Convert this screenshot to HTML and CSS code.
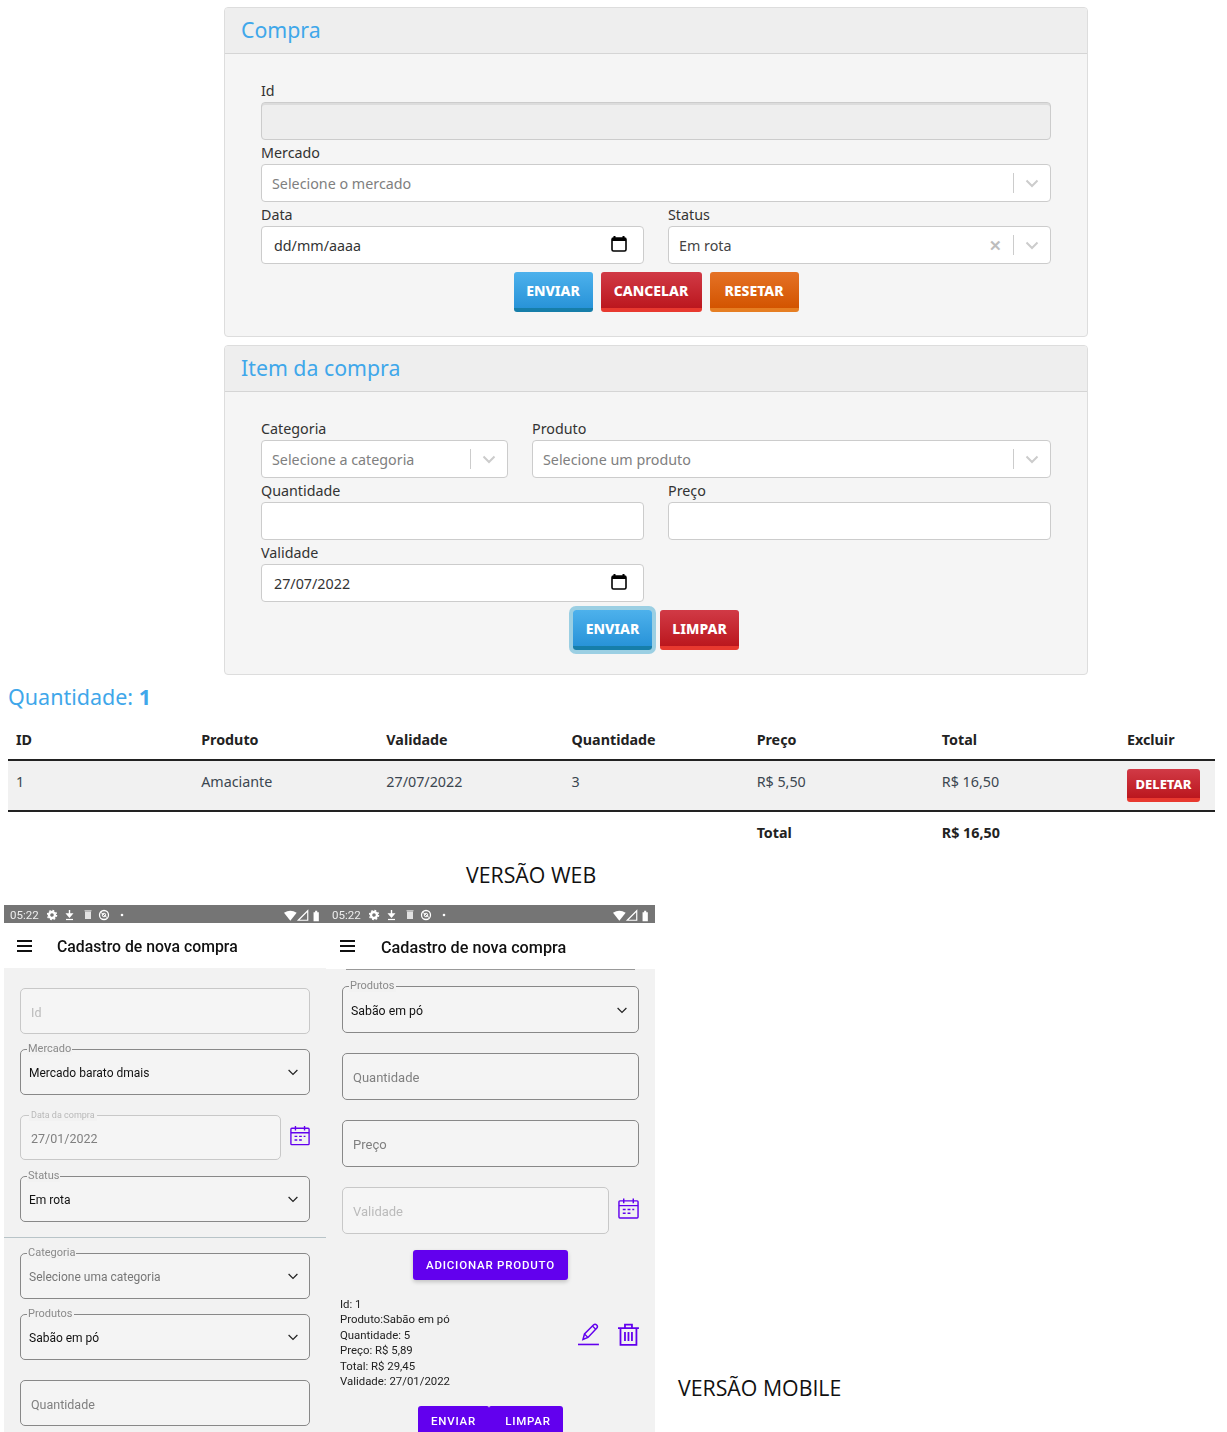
FILE: index.html

```html
<!DOCTYPE html>
<html lang="pt-BR">
<head>
  <meta charset="UTF-8" />
  <meta name="viewport" content="width=device-width, initial-scale=1.0" />
  <title>Cadastro de nova compra</title>
  <link rel="stylesheet" href="styles.css">
</head>
<body>
  <svg class="defs" width="0" height="0">
    <symbol id="chev" viewBox="0 0 20 20"><path d="M4.5 7.5 10 13l5.500-5.500" fill="none" stroke="currentColor"/></symbol>
    <symbol id="cal-black" viewBox="0 0 16 16"><path d="M3.500 0v2M12.500 0v2" stroke="#000" stroke-width="2"/><rect x="1" y="2" width="14" height="13" rx="1.500" fill="none" stroke="#000" stroke-width="1.600"/><rect x="1" y="2" width="14" height="3" fill="#000"/></symbol>
    <symbol id="cal-purple" viewBox="0 0 22 22"><rect x="1" y="3" width="20" height="18" rx="1" fill="none" stroke="#6200ee" stroke-width="1.500"/><path d="M1 8h20M6 0.500v5M16 0.500v5" stroke="#6200ee" stroke-width="1.500"/><path d="M5 12h3M10 12h3M15 12h2M5 16h3M10 16h3" stroke="#6200ee" stroke-width="1.500"/></symbol>
    <symbol id="status-left" viewBox="0 0 82 12">
      <circle cx="5" cy="6" r="3" fill="none" stroke="#fff" stroke-width="2.400"/>
      <circle cx="5" cy="6" r="4.600" fill="none" stroke="#fff" stroke-width="1.300" stroke-dasharray="1.800 1.800"/>
      <path d="M22.500 1v5.500M20 5l2.500 3L25 5z" stroke="#fff" stroke-width="1.400" fill="#fff"/>
      <path d="M19 10.500h7" stroke="#fff" stroke-width="1.200"/>
      <path d="M38 2.500h6V10h-6z" fill="#e2e2e2"/><path d="M37.500 1.800h7" stroke="#e2e2e2"/>
      <circle cx="57" cy="6" r="4.500" fill="none" stroke="#fff" stroke-width="1.300"/>
      <path d="M54 3.500 60 8.500" stroke="#fff"/><circle cx="57" cy="6" r="1.800" fill="none" stroke="#fff"/>
      <circle cx="75" cy="6" r="1.300" fill="#fff"/>
    </symbol>
    <symbol id="status-right" viewBox="0 0 36 12">
      <path d="M0 3.500Q6-0.500 12 3.500L6 11z" fill="#fff"/>
      <path d="M22.500 1.500v9h-9z" fill="none" stroke="#fff" stroke-width="1.100"/>
      <path d="M28 3h1.500V1.500h2V3H33v8.500h-5z" fill="#fff"/>
    </symbol>
  </svg>

  <div class="page">
    <section class="panel">
      <div class="panel-head"><h2>Compra</h2></div>
      <div class="panel-body">
        <label class="lbl">Id</label>
        <div class="input disabled"></div>
        <label class="lbl">Mercado</label>
        <div class="input">
          <span class="placeholder">Selecione o mercado</span>
          <span class="sep"></span>
          <svg class="chev"><use href="#chev"/></svg>
        </div>
        <div class="row">
          <div class="col">
            <label class="lbl">Data</label>
            <div class="input date">
              <span>dd/mm/aaaa</span>
              <svg class="cal"><use href="#cal-black"/></svg>
            </div>
          </div>
          <div class="col">
            <label class="lbl">Status</label>
            <div class="input">
              <span class="value">Em rota</span>
              <span class="clear">&#10005;</span>
              <span class="sep"></span>
              <svg class="chev"><use href="#chev"/></svg>
            </div>
          </div>
        </div>
        <div class="actions">
          <button class="btn blue">Enviar</button>
          <button class="btn red cancel">Cancelar</button>
          <button class="btn orange">Resetar</button>
        </div>
      </div>
    </section>

    <section class="panel">
      <div class="panel-head"><h2>Item da compra</h2></div>
      <div class="panel-body">
        <div class="row">
          <div class="col-cat">
            <label class="lbl">Categoria</label>
            <div class="input">
              <span class="placeholder">Selecione a categoria</span>
              <span class="sep"></span>
              <svg class="chev"><use href="#chev"/></svg>
            </div>
          </div>
          <div class="col">
            <label class="lbl">Produto</label>
            <div class="input">
              <span class="placeholder">Selecione um produto</span>
              <span class="sep"></span>
              <svg class="chev"><use href="#chev"/></svg>
            </div>
          </div>
        </div>
        <div class="row">
          <div class="col">
            <label class="lbl">Quantidade</label>
            <div class="input"></div>
          </div>
          <div class="col">
            <label class="lbl">Preço</label>
            <div class="input"></div>
          </div>
        </div>
        <div class="row">
          <div class="col">
            <label class="lbl">Validade</label>
            <div class="input date">
              <span>27/07/2022</span>
              <svg class="cal"><use href="#cal-black"/></svg>
            </div>
          </div>
          <div class="col"></div>
        </div>
        <div class="actions">
          <button class="btn blue focus">Enviar</button>
          <button class="btn red">Limpar</button>
        </div>
      </div>
    </section>

    <h3 class="count">Quantidade: <b>1</b></h3>

    <table class="items">
      <thead>
        <tr><th>ID</th><th>Produto</th><th>Validade</th><th>Quantidade</th><th>Preço</th><th>Total</th><th>Excluir</th></tr>
      </thead>
      <tbody>
        <tr>
          <td>1</td><td>Amaciante</td><td>27/07/2022</td><td>3</td><td>R$ 5,50</td><td>R$ 16,50</td>
          <td class="del-cell"><button class="btn red small">Deletar</button></td>
        </tr>
      </tbody>
      <tfoot>
        <tr><td></td><td></td><td></td><td></td><th>Total</th><th>R$ 16,50</th><td></td></tr>
      </tfoot>
    </table>

    <p class="caption web">VERSÃO WEB</p>

    <div class="phones">
      <div class="phone left">
        <div class="statusbar">
          <span class="time">05:22</span>
          <svg class="st-left"><use href="#status-left"/></svg>
          <svg class="st-right"><use href="#status-right"/></svg>
        </div>
        <div class="appbar">
          <div class="burger"><i></i><i></i><i></i></div>
          <span class="app-title">Cadastro de nova compra</span>
        </div>
        <div class="phone-body">
          <div class="mf off gap15"><span class="ph">Id</span></div>
          <div class="mf gap20"><span class="tag">Mercado</span><span class="val">Mercado barato dmais</span><svg class="mchev"><use href="#chev"/></svg></div>
          <div class="date-row gap16">
            <div class="mf off short"><span class="tag tiny">Data da compra</span><span class="ph dark">27/01/2022</span></div>
            <svg class="mcal"><use href="#cal-purple"/></svg>
          </div>
          <div class="mf gap15"><span class="tag">Status</span><span class="val">Em rota</span><svg class="mchev"><use href="#chev"/></svg></div>
          <div class="divider"></div>
          <div class="mf gap15"><span class="tag">Categoria</span><span class="val muted">Selecione uma categoria</span><svg class="mchev"><use href="#chev"/></svg></div>
          <div class="mf gap20"><span class="tag">Produtos</span><span class="val">Sabão em pó</span><svg class="mchev"><use href="#chev"/></svg></div>
          <div class="mf"><span class="ph dark">Quantidade</span></div>
        </div>
      </div>

      <div class="phone right">
        <div class="statusbar">
          <span class="time">05:22</span>
          <svg class="st-left"><use href="#status-left"/></svg>
          <svg class="st-right"><use href="#status-right"/></svg>
        </div>
        <div class="appbar">
          <div class="burger"><i></i><i></i><i></i></div>
          <span class="app-title">Cadastro de nova compra</span>
        </div>
        <div class="phone-body">
          <div class="cut-line"></div>
          <div class="mf gap20"><span class="tag">Produtos</span><span class="val">Sabão em pó</span><svg class="mchev"><use href="#chev"/></svg></div>
          <div class="mf gap20"><span class="ph dark">Quantidade</span></div>
          <div class="mf gap20"><span class="ph dark">Preço</span></div>
          <div class="date-row">
            <div class="mf off short"><span class="ph">Validade</span></div>
            <svg class="mcal"><use href="#cal-purple"/></svg>
          </div>
          <button class="mbtn add">Adicionar produto</button>
          <div class="item-row">
            <div class="item-info">
              Id: 1<br>Produto:Sabão em pó<br>Quantidade: 5<br>Preço: R$ 5,89<br>Total: R$ 29,45<br>Validade: 27/01/2022
            </div>
            <svg class="edit" viewBox="0 0 23 23"><path d="M6 16.500 7.500 11 16.500 2c1-1 2.200-1 3.200 0s1 2.200 0 3.200L11 14.500z" fill="none" stroke="#6200ee" stroke-width="1.500"/><path d="M7.500 11l3.500 3.500M15.500 3l3.500 3.500" stroke="#6200ee" stroke-width="1.200"/><path d="M1 21.500h21" stroke="#6200ee" stroke-width="1.600"/></svg>
            <svg class="trash" viewBox="0 0 21 23"><path d="M0 5h21M7 5V1.500h7V5" fill="none" stroke="#6200ee" stroke-width="1.800"/><path d="M2.500 5v17h16V5" fill="none" stroke="#6200ee" stroke-width="1.800"/><path d="M7 9v9M10.500 9v9M14 9v9" stroke="#6200ee" stroke-width="1.800"/></svg>
          </div>
          <div class="bottom-btns">
            <button class="mbtn send">Enviar</button>
            <button class="mbtn clean">Limpar</button>
          </div>
        </div>
      </div>

      <p class="caption mobile">VERSÃO MOBILE</p>
    </div>
  </div>
</body>
</html>
```

FILE: styles.css

```css
body {
  margin: 0;
  background-color: #fff;
  font-family: "Noto Sans", "Lato", sans-serif;
  font-size: 14.300px;
  color: #333;
}
.defs {
  display: block;
  height: 0;
}
.page {
  width: 1227px;
  height: 1432px;
  overflow: hidden;
  padding-top: 7px;
  box-sizing: border-box;
}

/* paineis */
.panel {
  width: 864px;
  margin: 0 0 8px 224px;
  background-color: #f5f5f5;
  border: 1px solid #ddd;
  border-radius: 4px;
  box-sizing: border-box;
}
.panel-head {
  height: 46px;
  box-sizing: border-box;
  padding: 0 16px;
  background-color: #eee;
  border-bottom: 1px solid #d5d5d5;
  border-radius: 3px 3px 0 0;
}
.panel-head h2 {
  margin: 0;
  font-size: 21.300px;
  line-height: 43px;
  font-weight: 400;
  color: #3fa7ea;
}
.panel-body {
  padding: 24px 36px;
}
.row {
  display: flex;
  gap: 24px;
}
.col {
  flex: 1;
  min-width: 0;
}
.col-cat {
  width: 247px;
  flex: none;
}
.lbl {
  display: block;
  height: 24px;
  line-height: 26px;
  color: #333;
}
.input {
  display: flex;
  align-items: center;
  height: 38px;
  box-sizing: border-box;
  padding-left: 10px;
  background-color: #fff;
  border: 1px solid #ccc;
  border-radius: 4px;
  color: #333;
}
.input.disabled {
  background-color: #eee;
  box-shadow: inset 0 2px 0 #dcdcdc;
}
.input.date {
  padding: 0 16px 0 12px;
  justify-content: space-between;
}
.placeholder {
  color: #808080;
  flex: 1;
}
.value {
  color: #444;
  flex: 1;
}
.clear {
  color: #bdbdbd;
  font-size: 15px;
  font-weight: 700;
  margin-right: 11px;
}
.sep {
  width: 1px;
  height: 20px;
  background-color: #ccc;
}
.chev {
  width: 20px;
  height: 20px;
  margin: 0 8px;
  color: #ccc;
  stroke-width: 2;
}
.cal {
  width: 16px;
  height: 16px;
  margin-bottom: 3px;
}
.actions {
  display: flex;
  justify-content: center;
  gap: 8px;
  margin-top: 8px;
}
.btn {
  width: 79px;
  height: 40px;
  padding: 0;
  border: none;
  border-radius: 3px;
  font-family: inherit;
  font-size: 14px;
  font-weight: 800;
  text-transform: uppercase;
  color: #fff;
}
.blue {
  background: linear-gradient(#4db1ec, #2893d8);
  border-bottom: 4px solid #167ea9;
}
.red {
  background: linear-gradient(#d13a46, #bb171e);
  border-bottom: 4px solid #e8392f;
}
.cancel {
  width: 101px;
}
.orange {
  width: 89px;
  background: linear-gradient(#e57226, #d35400);
  border-bottom: 4px solid #e67e22;
}
.focus {
  box-shadow: 0 0 0 4px #9bcfe3;
}

/* tabela */
.count {
  margin: 8px 0 9px 8px;
  font-size: 21.500px;
  line-height: 28px;
  font-weight: 400;
  color: #3fa7ea;
}
.items {
  width: 1207px;
  margin-left: 8px;
  border-collapse: separate;
  border-spacing: 0;
  table-layout: fixed;
}
.items th,
.items td {
  width: 185.150px;
  padding: 0 8px;
  box-sizing: border-box;
  text-align: left;
  font-size: 14.300px;
  color: #222;
}
.items th:last-child,
.items td:last-child {
  width: 96px;
}
.items thead th {
  height: 41px;
  border-bottom: 2px solid #222;
}
.items tbody td {
  height: 51px;
  padding-top: 9px;
  line-height: 24px;
  vertical-align: top;
  background-color: #f1f1f1;
  border-bottom: 2px solid #222;
  color: #3b4650;
}
.items tbody td.del-cell {
  padding-top: 8px;
}
.items tfoot th {
  padding-top: 9px;
  line-height: 24px;
  vertical-align: top;
}
.btn.small {
  display: block;
  width: 73px;
  height: 33px;
  font-size: 13px;
}
.caption {
  margin: 0;
  color: #111;
  font-family: "Open Sans", sans-serif;
  font-size: 21.300px;
  line-height: 30px;
}
.caption.web {
  margin: 15px 0 15px 466px;
}
.caption.mobile {
  margin: 468px 0 0 23px;
}

/* telas do celular */
.phones {
  display: flex;
  margin-left: 4px;
  height: 527px;
  overflow: hidden;
  font-family: "Roboto", sans-serif;
  font-size: 12px;
}
.phone {
  flex: none;
  height: 527px;
  background-color: #f2f2f2;
  overflow: hidden;
  filter: blur(0.3px);
}
.phone.left {
  width: 322px;
}
.phone.right {
  width: 329px;
}
.statusbar {
  display: flex;
  align-items: center;
  height: 18px;
  box-sizing: border-box;
  padding-top: 2px;
  background-color: #757575;
  color: #eee;
}
.time {
  margin-left: 6px;
  font-size: 11.500px;
}
.st-left {
  width: 82px;
  height: 12px;
  margin-left: 8px;
}
.st-right {
  width: 38px;
  height: 13px;
  margin-left: auto;
  margin-right: 4px;
}
.appbar {
  display: flex;
  align-items: center;
  height: 45px;
  background-color: #fff;
}
.right .appbar {
  height: 46px;
}
.burger {
  display: flex;
  flex-direction: column;
  gap: 3px;
  width: 15px;
  margin-left: 13px;
}
.burger i {
  display: block;
  height: 2px;
  background-color: #111;
}
.right .burger {
  margin-left: 14px;
}
.app-title {
  margin-left: 25px;
  padding-top: 2px;
  font-size: 15.800px;
  font-weight: 500;
  color: #111;
}
.right .app-title {
  margin-left: 26px;
  font-size: 16.200px;
}
.phone-body {
  padding: 20px 16px 0;
}
.right .phone-body {
  position: relative;
  padding-top: 17px;
  padding-right: 16px;
}
.cut-line {
  position: absolute;
  top: 0;
  left: 20px;
  width: 289px;
  height: 1px;
  background-color: #999;
}
.mf {
  position: relative;
  display: flex;
  flex: none;
  align-items: center;
  width: 290px;
  height: 46px;
  box-sizing: border-box;
  padding: 2px 8px 0;
  border: 1px solid #888;
  border-radius: 5px;
  background-color: #f4f4f4;
}
.right .mf {
  width: 297px;
  height: 47px;
}
.mf.off {
  border-color: #c8c8c8;
  background-color: #f5f5f5;
}
.mf.short {
  width: 261px;
  height: 45px;
}
.right .mf.short {
  width: 267px;
  height: 47px;
}
.gap15 { margin-bottom: 15px; }
.gap16 { margin-bottom: 16px; }
.gap20 { margin-bottom: 20px; }
.tag {
  position: absolute;
  top: -8px;
  left: 6px;
  padding: 0 1px;
  background-color: #f2f2f2;
  font-size: 11px;
  line-height: 13px;
  color: #8a8a8a;
}
.tag.tiny {
  left: 8px;
  top: -6px;
  padding: 0 2px;
  font-size: 9px;
  line-height: 11px;
  color: #b9b9b9;
}
.val {
  color: #111;
  flex: 1;
}
.right .val {
  font-size: 12.300px;
}
.val.muted {
  color: #777;
}
.ph {
  margin-left: 2px;
  font-size: 12.500px;
  color: #bbb;
}
.right .ph {
  font-size: 13px;
}
.ph.dark {
  color: #808080;
}
.mchev {
  width: 16px;
  height: 16px;
  margin: -2px 0 0;
  color: #222;
  stroke-width: 1.500;
}
.date-row {
  display: flex;
  align-items: center;
  gap: 9px;
}
.mcal {
  width: 23px;
  height: 23px;
  margin-bottom: 4px;
}
.divider {
  height: 1px;
  margin: 0 -16px 15px;
  background-color: #b8c4c8;
}
.mbtn {
  border: none;
  background-color: #6200ee;
  color: #fff;
  font-family: inherit;
  font-size: 11.500px;
  font-weight: 500;
  letter-spacing: 0.800px;
  text-transform: uppercase;
}
.add {
  display: block;
  width: 155px;
  height: 30px;
  margin: 16px 0 0 71px;
  padding: 0;
  border-radius: 3px;
  box-shadow: 0 2px 4px rgba(0, 0, 0, 0.2);
}
.item-row {
  display: flex;
  align-items: center;
  margin: 17px 0 0 -2px;
}
.item-info {
  width: 238px;
  font-size: 11.400px;
  line-height: 15.400px;
  color: #222;
}
.edit {
  width: 23px;
  height: 23px;
  margin-bottom: 18px;
}
.trash {
  width: 21px;
  height: 23px;
  margin-left: 18px;
  margin-bottom: 18px;
}
.bottom-btns {
  display: flex;
  margin: 17px 0 0 76px;
}
.bottom-btns .mbtn {
  height: 34px;
  padding: 0 0 4px;
}
.send {
  width: 71px;
  border-radius: 3px 2px 0 0;
}
.bottom-btns .clean {
  width: 74px;
  padding-left: 4px;
  border-radius: 2px 3px 0 0;
}
```
